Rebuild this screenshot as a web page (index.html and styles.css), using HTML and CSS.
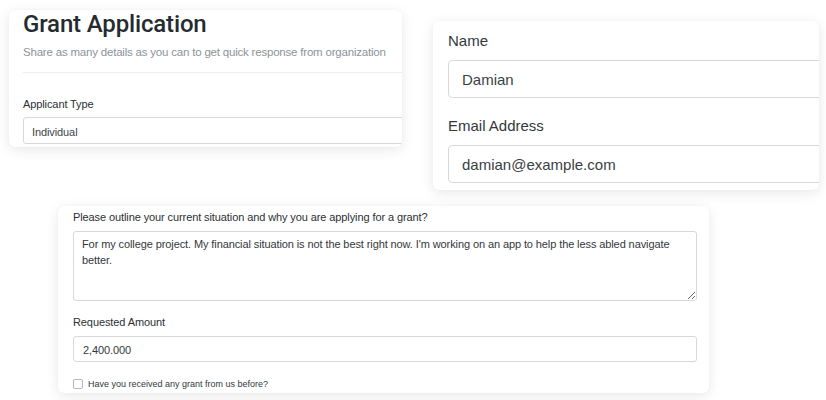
FILE: index.html
```html
<!DOCTYPE html>
<html lang="en">
<head>
<meta charset="utf-8">
<title>Grant Application</title>
<link rel="stylesheet" href="styles.css">
</head>
<body>
<main class="canvas">
  <div class="top-row">
    <section class="card card-intro">
      <div class="card-inner intro-inner">
        <h1 class="title">Grant Application</h1>
        <p class="subtitle">Share as many details as you can to get quick response from organization</p>
        <hr class="divider">
        <label class="label-sm" for="type">Applicant Type</label>
        <input class="field field-sm" id="type" type="text" value="Individual" readonly>
      </div>
    </section>
    <section class="card card-contact">
      <div class="card-inner contact-inner">
        <label class="label-lg" for="name">Name</label>
        <input class="field field-lg" id="name" type="text" value="Damian" readonly>
        <label class="label-lg label-gap" for="email">Email Address</label>
        <input class="field field-lg" id="email" type="text" value="damian@example.com" readonly>
      </div>
    </section>
  </div>
  <section class="card card-details">
    <label class="label-sm" for="reason">Please outline your current situation and why you are applying for a grant?</label>
    <textarea class="area" id="reason" readonly>For my college project. My financial situation is not the best right now. I'm working on an app to help the less abled navigate better.</textarea>
    <label class="label-sm label-amount" for="amount">Requested Amount</label>
    <input class="field field-amount" id="amount" type="text" value="2,400.000" readonly>
    <div class="check-row">
      <input class="check" id="before" type="checkbox">
      <label class="check-label" for="before">Have you received any grant from us before?</label>
    </div>
  </section>
</main>
</body>
</html>
```
FILE: styles.css
```css
* { box-sizing: border-box; }

html, body {
  margin: 0;
  padding: 0;
  background: #ffffff;
}

body {
  font-family: "Liberation Sans", Arial, sans-serif;
  color: #212529;
  width: 826px;
  height: 400px;
  overflow: hidden;
}

.canvas {
  display: flex;
  flex-direction: column;
  align-items: flex-start;
}

.top-row {
  display: flex;
  align-items: flex-start;
}

.card {
  background: #ffffff;
  border-radius: 6px;
  box-shadow: 0 3px 14px rgba(0, 0, 0, 0.09), 0 0 3px rgba(0, 0, 0, 0.03);
  overflow: hidden;
}

.card-inner {
  display: flex;
  flex-direction: column;
  align-items: stretch;
}

/* Card 1 */
.card-intro {
  margin: 10px 0 0 9px;
  width: 393px;
  height: 137px;
  padding-left: 14px;
}

.intro-inner {
  width: 440px;
}

.title {
  margin: 0;
  font-family: Roboto, "Liberation Sans", sans-serif;
  font-weight: 500;
  font-size: 24px;
  line-height: 28px;
  color: #262b30;
  letter-spacing: -0.15px;
}

.subtitle {
  margin: 6px 0 0;
  font-size: 11.5px;
  line-height: 16px;
  letter-spacing: -0.2px;
  color: #8c939b;
}

.divider {
  margin: 12px 0 0;
  border: 0;
  border-top: 1px solid #eceef0;
  height: 0;
}

.label-sm {
  display: block;
  font-size: 11px;
  line-height: 16px;
  letter-spacing: -0.1px;
  color: #2b3035;
}

.intro-inner .label-sm {
  margin-top: 23px;
}

.field {
  display: block;
  font-family: "Liberation Sans", Arial, sans-serif;
  border: 1px solid #d5d9dd;
  background: #ffffff;
  color: #3d4349;
  outline: none;
  margin: 0;
}

.field-sm {
  margin-top: 5px;
  height: 27px;
  padding: 2px 8px 0;
  font-size: 11px;
  letter-spacing: -0.1px;
  border-radius: 3px;
}

/* Card 2 */
.card-contact {
  margin: 21px 0 0 31px;
  width: 386px;
  height: 169px;
  padding: 9px 0 0 15px;
}

.contact-inner {
  width: 420px;
}

.label-lg {
  display: block;
  font-size: 15px;
  line-height: 22px;
  color: #33383d;
}

.label-gap {
  margin-top: 17px;
}

.field-lg {
  margin-top: 8px;
  height: 38px;
  padding: 0 13px;
  font-size: 15px;
  border-radius: 4px;
  color: #3a3f44;
}

/* Card 3 */
.card-details {
  margin: 16px 0 0 58px;
  width: 651px;
  height: 187px;
  padding: 3px 12px 0 15px;
}

.area {
  display: block;
  margin-top: 6px;
  width: 100%;
  height: 70px;
  padding: 4px 8px;
  font-family: "Liberation Sans", Arial, sans-serif;
  font-size: 11px;
  line-height: 16px;
  letter-spacing: -0.1px;
  color: #33383d;
  border: 1px solid #d5d9dd;
  border-radius: 3px;
  outline: none;
  resize: vertical;
}

.label-amount {
  margin-top: 13px;
}

.field-amount {
  margin-top: 6px;
  width: 100%;
  height: 26px;
  padding: 1px 9px 0;
  font-size: 11px;
  letter-spacing: -0.1px;
  border-radius: 3px;
  color: #33383d;
}

.check-row {
  display: flex;
  align-items: center;
  gap: 5px;
  margin-top: 16px;
}

.check {
  appearance: none;
  -webkit-appearance: none;
  margin: 0;
  width: 10px;
  height: 10px;
  border: 1px solid #b4b9be;
  border-radius: 2px;
  background: #ffffff;
}

.check-label {
  font-size: 9px;
  line-height: 12px;
  color: #33383d;
}
```
